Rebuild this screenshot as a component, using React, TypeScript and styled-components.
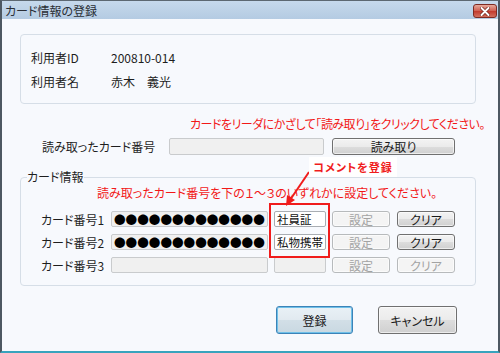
import React from 'react';
import styled, { createGlobalStyle } from 'styled-components';

const GlobalStyle = createGlobalStyle`
  html, body {
    margin: 0;
    padding: 0;
    background: #ffffff;
  }
  body {
    font-family: "Noto Sans CJK JP", "Noto Sans", sans-serif;
    font-size: 12px;
    font-feature-settings: "palt";
    color: #1e1e1e;
  }
`;

// window frame
const Window = styled.div`
  width: 500px;
  height: 353px;
  box-sizing: border-box;
  display: flex;
  flex-direction: column;
  background: #f7f9fd;
  border-left: 2px solid #4d5862;
  border-right: 2px solid #4d5862;
  border-top: 1px solid #5d6872;
  border-bottom: 2px solid #38a3bd;
`;

const TitleBar = styled.div`
  height: 18px;
  flex: none;
  display: flex;
  align-items: center;
  justify-content: space-between;
  padding: 0 1px 0 3px;
  background: linear-gradient(#c6d9ec, #b4cbe2);
  color: #2a2f36;
  font-size: 12px;
`;

const CloseButton = styled.div`
  width: 22px;
  height: 12px;
  margin-top: 2px;
  display: flex;
  align-items: center;
  justify-content: center;
  border: 1px solid #7d2a22;
  border-radius: 3px;
  background: linear-gradient(#e6a99b, #cf5d4f 50%, #c2392c 51%, #d2705e);
`;

const Content = styled.div`
  flex: 1;
  display: flex;
  flex-direction: column;
  padding: 15px 22px 0 18px;
`;

const InfoPanel = styled.div`
  height: 70px;
  box-sizing: border-box;
  border: 1px solid #d6dee7;
  border-radius: 4px;
  padding: 10px 10px 0;
  display: flex;
  flex-direction: column;
`;

const InfoRow = styled.div`
  display: flex;
  align-items: center;
  height: 24px;
`;

const InfoLabel = styled.span`
  width: 80px;
`;

const Hint = styled.div<{ $indent: number; $tight?: boolean }>`
  color: #f21818;
  line-height: 16px;
  height: 16px;
  white-space: nowrap;
  letter-spacing: ${p => (p.$tight ? '-0.5px' : '0')};
  padding-left: ${p => p.$indent}px;
`;

const ReadRow = styled.div`
  display: flex;
  align-items: center;
  height: 17px;
  margin-top: 6px;
  padding-left: 22px;
`;

const ReadLabel = styled.span`
  width: 127px;
`;

const Field = styled.div<{ $w: number; $h: number; $white?: boolean }>`
  width: ${p => p.$w}px;
  height: ${p => p.$h}px;
  flex: none;
  box-sizing: border-box;
  border: 1px solid ${p => (p.$white ? '#a9adb2' : '#c9cbcd')};
  border-radius: 2px;
  background: ${p => (p.$white ? '#ffffff' : '#f0f0f0')};
  display: flex;
  align-items: center;
  padding-left: 2px;
  overflow: hidden;
  white-space: nowrap;
  font-size: 11.5px;
  color: #111;
`;

const Dots = styled.span`
  font-size: 11.6px;
  font-feature-settings: normal;
  color: #000;
`;

const Button = styled.div<{ $w: number; $h: number; $disabled?: boolean; $default?: boolean }>`
  width: ${p => p.$w}px;
  height: ${p => p.$h}px;
  flex: none;
  box-sizing: border-box;
  display: flex;
  align-items: center;
  justify-content: center;
  border-radius: 3px;
  font-size: 12px;
  border: 1px solid
    ${p => (p.$disabled ? '#b7babc' : p.$default ? '#3c83b8' : '#707070')};
  color: ${p => (p.$disabled ? '#a3a3a3' : '#1a1a1a')};
  background: ${p =>
    p.$disabled
      ? '#f4f4f4'
      : p.$default
      ? 'linear-gradient(#e9f1f6, #e1eaf0 50%, #d2dfe7 51%, #c9d8e1)'
      : 'linear-gradient(#f3f3f3, #ebebeb 50%, #dddddd 51%, #d0d0d0)'};
  box-shadow: ${p => (p.$default ? 'inset 0 0 0 1px #6fc0e8' : 'inset 0 0 0 1px rgba(255,255,255,0.6)')};
`;

const CardGroup = styled.fieldset`
  margin: 14px 0 0;
  padding: 0 12px 12px 6px;
  border: 1px solid #d6dee7;
  border-radius: 4px;
  min-width: 0;
`;

const Legend = styled.legend`
  padding: 0 1px 0 0;
  line-height: 16px;
`;

const Rows = styled.div`
  position: relative;
  display: flex;
  flex-direction: column;
  gap: 7px;
  margin-top: 10px;
`;

const CardRow = styled.div`
  display: flex;
  align-items: center;
  height: 16px;
  padding-left: 14px;
`;

const CardLabel = styled.span`
  width: 70px;
`;

const Gap = styled.span<{ $w: number }>`
  width: ${p => p.$w}px;
  flex: none;
`;

// annotation drawn over the form
const Highlight = styled.div`
  position: absolute;
  left: 242px;
  top: -8px;
  width: 61px;
  height: 55px;
  box-sizing: border-box;
  border: 2px solid #f01c1c;
`;

const Callout = styled.div`
  position: absolute;
  left: 282px;
  top: -54px;
  width: 88px;
  height: 20px;
  background: #ffffff;
  color: #f01c1c;
  font-size: 11px;
  font-weight: 600;
  display: flex;
  align-items: center;
  justify-content: center;
  letter-spacing: 1px;
`;

const Arrow = styled.svg`
  position: absolute;
  left: 253px;
  top: -43px;
  overflow: visible;
`;

const Footer = styled.div`
  display: flex;
  justify-content: flex-end;
  gap: 25px;
  margin-top: 20px;
  padding-right: 19px;
`;

const DOTS = '●'.repeat(13);

const cards = [
  { label: 'カード番号1', dots: true, comment: '社員証', clear: true },
  { label: 'カード番号2', dots: true, comment: '私物携帯', clear: true },
  { label: 'カード番号3', dots: false, comment: '', clear: false },
];

export default function App() {
  return (
    <>
      <GlobalStyle />
      <Window>
        <TitleBar>
          <span>カード情報の登録</span>
          <CloseButton>
            <svg width="10" height="9" viewBox="0 0 10 9">
              <path d="M1.5 1 L8.5 8 M8.5 1 L1.5 8" stroke="#6b2018" strokeWidth="3.4" strokeLinecap="round" />
              <path d="M1.5 1 L8.5 8 M8.5 1 L1.5 8" stroke="#ffffff" strokeWidth="2" strokeLinecap="round" />
            </svg>
          </CloseButton>
        </TitleBar>
        <Content>
          <InfoPanel>
            <InfoRow>
              <InfoLabel>利用者ID</InfoLabel>
              <span>200810-014</span>
            </InfoRow>
            <InfoRow>
              <InfoLabel>利用者名</InfoLabel>
              <span>赤木　義光</span>
            </InfoRow>
          </InfoPanel>

          <Hint $indent={170} $tight style={{ marginTop: 12 }}>
            カードをリーダにかざして「読み取り」をクリックしてください。
          </Hint>

          <ReadRow>
            <ReadLabel>読み取ったカード番号</ReadLabel>
            <Field $w={155} $h={17} />
            <Gap $w={8} />
            <Button $w={123} $h={17}>読み取り</Button>
          </ReadRow>

          <CardGroup>
            <Legend>カード情報</Legend>
            <Hint $indent={70}>読み取ったカード番号を下の１～３のいずれかに設定してください。</Hint>
            <Rows>
              {cards.map(c => (
                <CardRow key={c.label}>
                  <CardLabel>{c.label}</CardLabel>
                  <Field $w={157} $h={16}>
                    {c.dots && <Dots>{DOTS}</Dots>}
                  </Field>
                  <Gap $w={6} />
                  <Field $w={52} $h={16} $white={c.comment !== ''}>
                    {c.comment}
                  </Field>
                  <Gap $w={6} />
                  <Button $w={58} $h={16} $disabled>
                    設定
                  </Button>
                  <Gap $w={7} />
                  <Button $w={58} $h={16} $disabled={!c.clear}>
                    クリア
                  </Button>
                </CardRow>
              ))}
              <Highlight />
              <Arrow width="40" height="40">
                <line x1="29" y1="4" x2="10" y2="32" stroke="#f01c1c" strokeWidth="2" />
                <polygon points="6,38 7,27 15,32" fill="#f01c1c" />
              </Arrow>
              <Callout>コメントを登録</Callout>
            </Rows>
          </CardGroup>

          <Footer>
            <Button $w={77} $h={28} $default>
              登録
            </Button>
            <Button $w={79} $h={28}>
              キャンセル
            </Button>
          </Footer>
        </Content>
      </Window>
    </>
  );
}
